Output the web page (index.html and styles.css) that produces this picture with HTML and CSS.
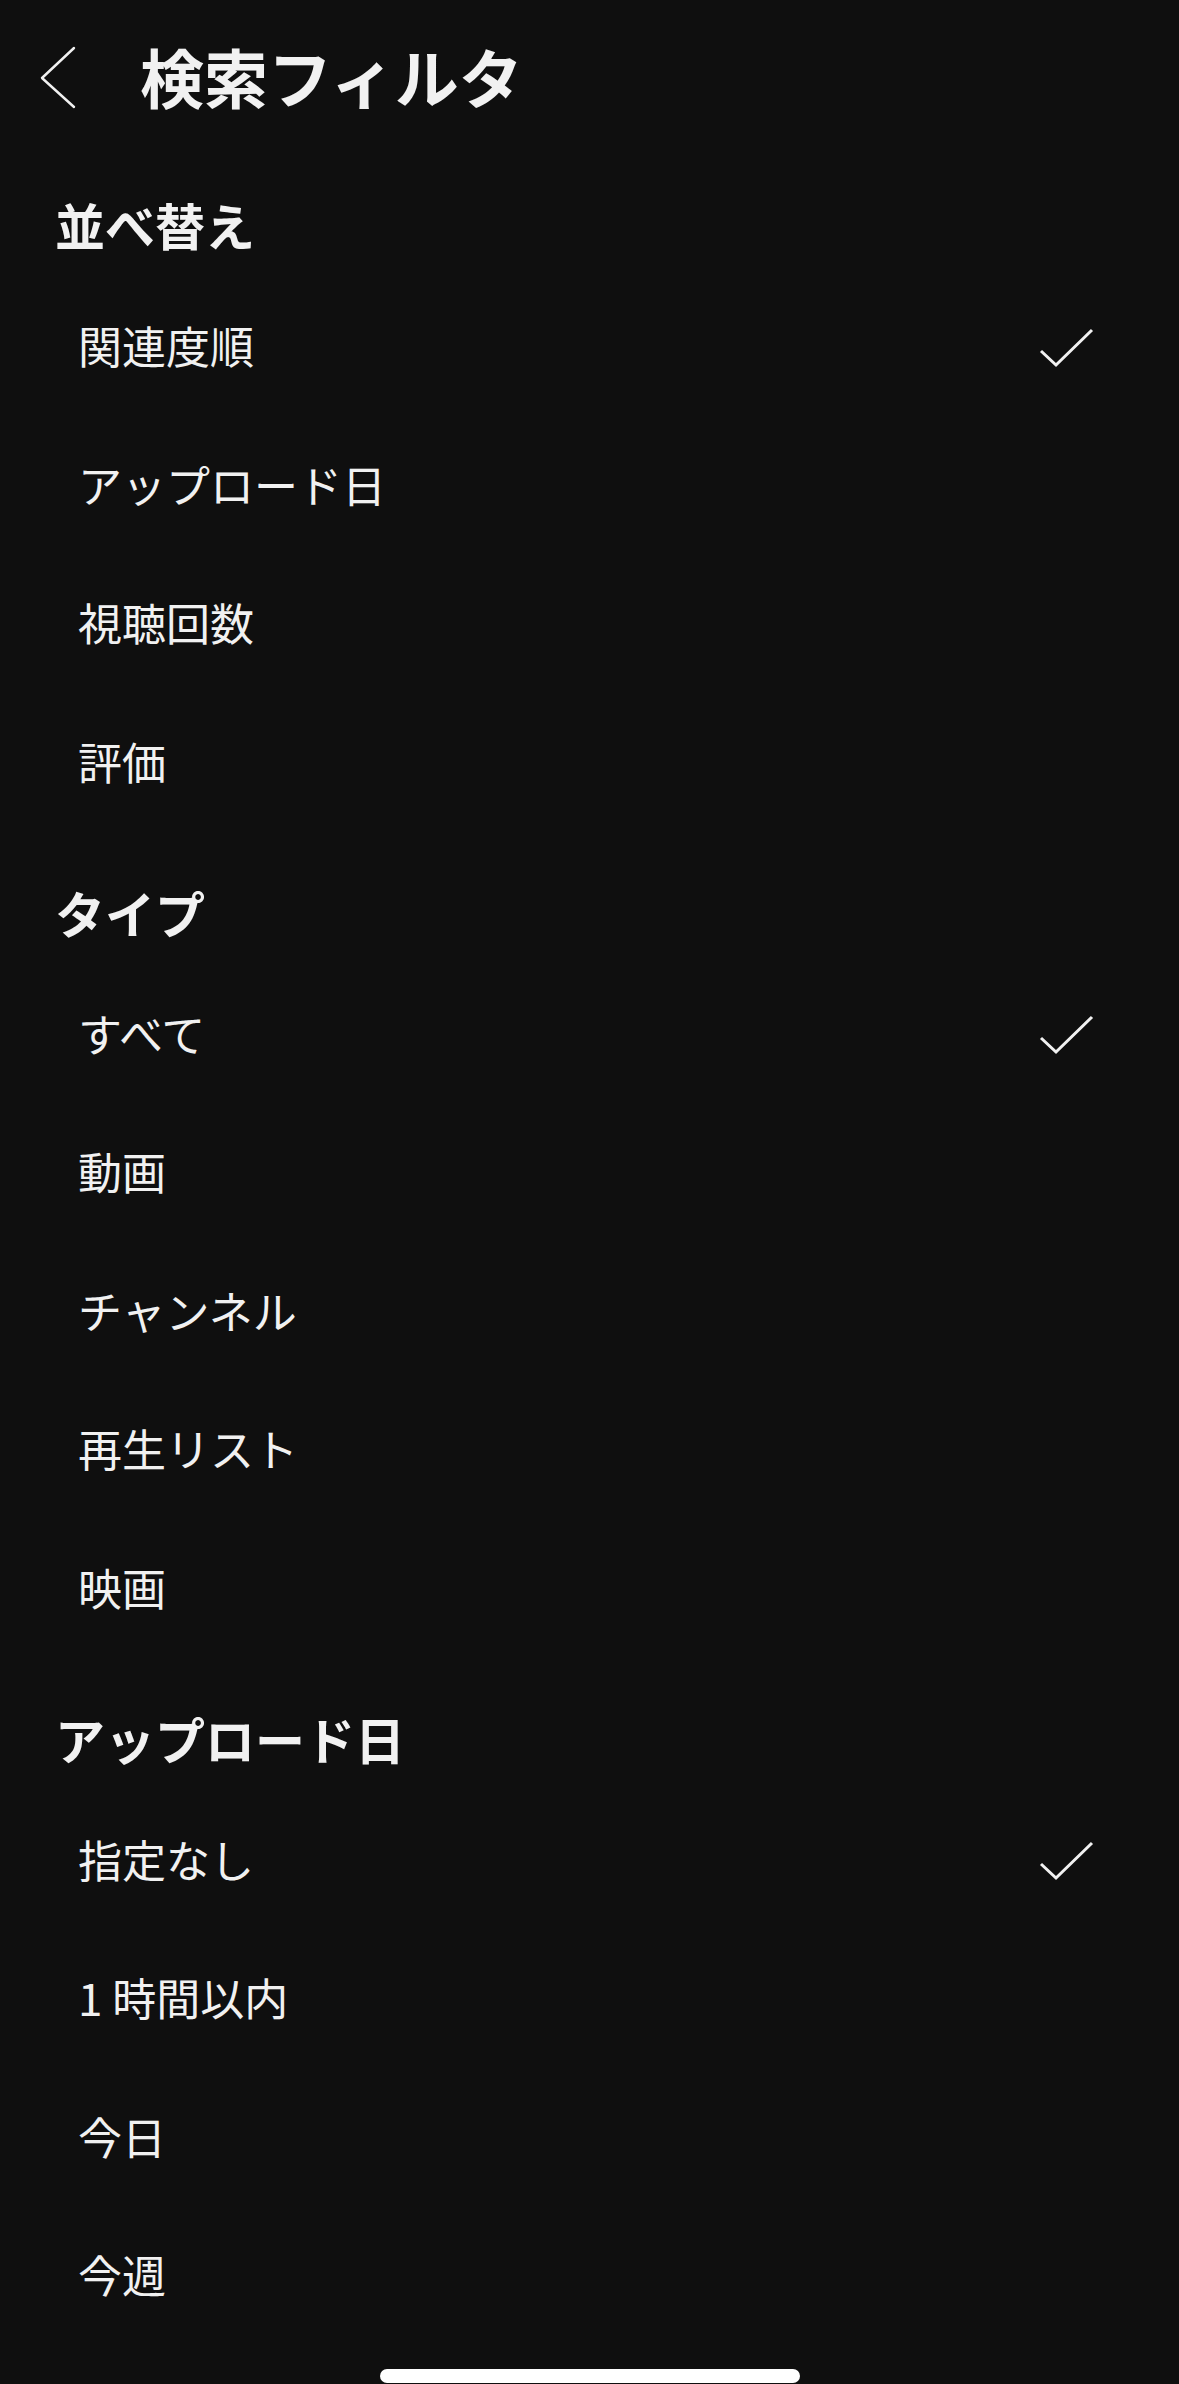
FILE: index.html
```html
<!DOCTYPE html>
<html lang="ja">
<head>
    <meta charset="UTF-8">
    <meta name="viewport" content="width=device-width, initial-scale=1.0">
    <title>検索フィルタ</title>
    <link rel="stylesheet" href="styles.css">
</head>
<body>
    <div class="screen">
        <!-- 上部バー -->
        <div class="topbar">
            <svg class="back" width="40" height="66" viewBox="0 0 40 66">
                <polyline points="36,4 4,34 36,63" fill="none" stroke="#f1f1f1" stroke-width="2.4" stroke-linecap="round" stroke-linejoin="round"/>
            </svg>
            <h1>検索フィルタ</h1>
        </div>

        <div class="filters">
            <section class="group">
                <h2>並べ替え</h2>
                <div class="row">関連度順
                    <svg class="check" width="60" height="40" viewBox="0 0 60 40"><polyline points="2,23 17,37 53,2" fill="none" stroke="#f1f1f1" stroke-width="3"/></svg>
                </div>
                <div class="row">アップロード日</div>
                <div class="row">視聴回数</div>
                <div class="row">評価</div>
            </section>

            <section class="group">
                <h2>タイプ</h2>
                <div class="row">すべて
                    <svg class="check" width="60" height="40" viewBox="0 0 60 40"><polyline points="2,23 17,37 53,2" fill="none" stroke="#f1f1f1" stroke-width="3"/></svg>
                </div>
                <div class="row">動画</div>
                <div class="row">チャンネル</div>
                <div class="row">再生リスト</div>
                <div class="row">映画</div>
            </section>

            <section class="group">
                <h2>アップロード日</h2>
                <div class="row">指定なし
                    <svg class="check" width="60" height="40" viewBox="0 0 60 40"><polyline points="2,23 17,37 53,2" fill="none" stroke="#f1f1f1" stroke-width="3"/></svg>
                </div>
                <div class="row">1 時間以内</div>
                <div class="row">今日</div>
                <div class="row">今週</div>
            </section>
        </div>

        <div class="home-bar"></div>
    </div>
</body>
</html>
```

FILE: styles.css
```css
body {
    margin: 0;
    padding: 0;
    background-color: #0f0f0f;
    color: #f1f1f1;
    font-family: "Noto Sans CJK JP", "Noto Sans", sans-serif;
}
.screen {
    position: relative;
    height: 2384px;
    overflow: hidden;
}
.topbar {
    display: flex;
    align-items: center;
    height: 154px;
    padding-left: 38px;
}
.back {
    display: block;
    flex-shrink: 0;
}
.topbar h1 {
    margin: 0 0 4px 62px;
    font-size: 64px;
    font-weight: 700;
    line-height: 1;
}
.filters {
    display: flex;
    flex-direction: column;
    gap: 30px;
    padding-top: 21px;
}
.group h2 {
    display: flex;
    align-items: center;
    box-sizing: border-box;
    height: 103.5px;
    margin: 0;
    padding: 0 0 5px 55px;
    font-size: 50px;
    font-weight: 700;
    line-height: 1;
}
.row {
    display: flex;
    align-items: center;
    justify-content: space-between;
    box-sizing: border-box;
    height: 138.5px;
    padding: 0 80px 5px 78px;
    font-size: 44px;
    line-height: 1;
}
.check {
    display: block;
    margin-top: 5px;
}
.home-bar {
    position: absolute;
    left: 380px;
    bottom: 1px;
    width: 420px;
    height: 14px;
    border-radius: 7px;
    background: #ffffff;
}
```
